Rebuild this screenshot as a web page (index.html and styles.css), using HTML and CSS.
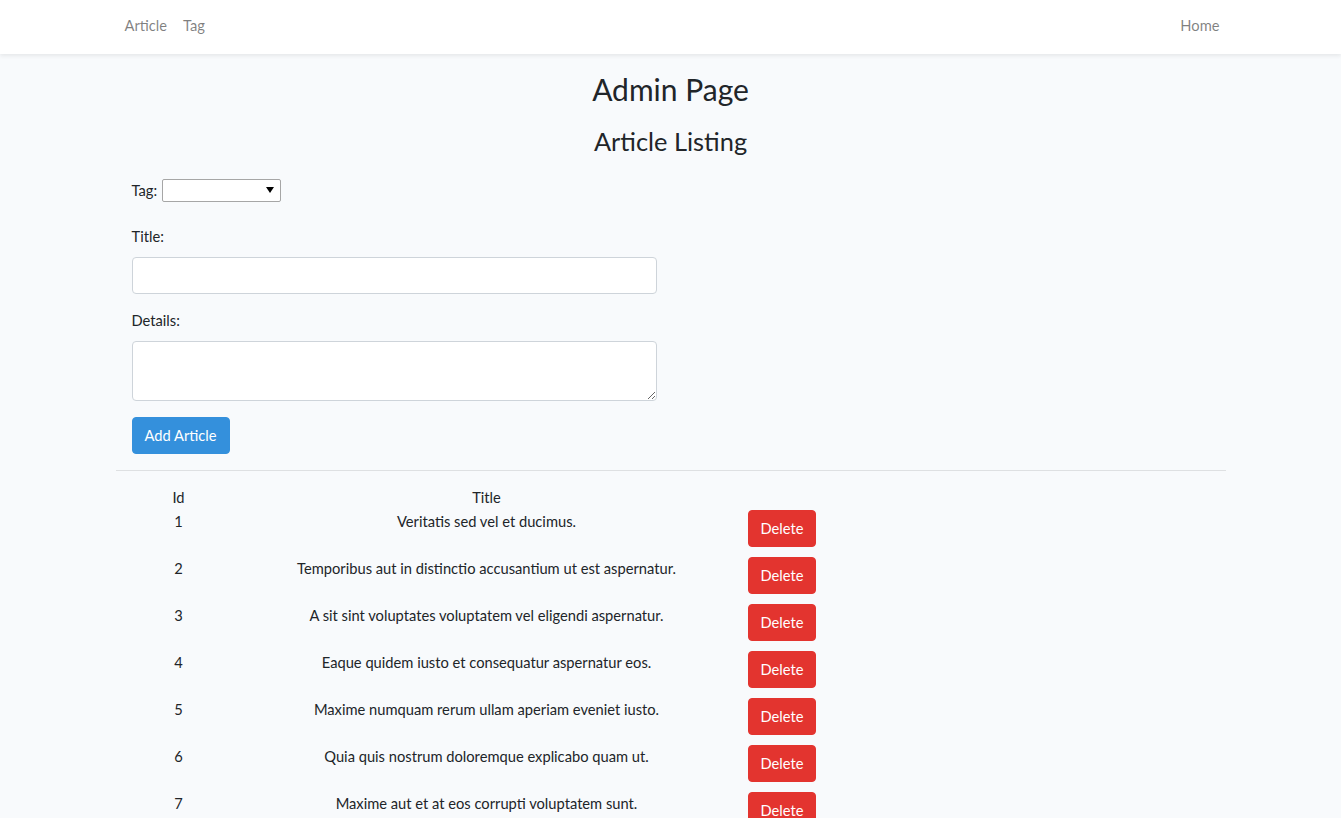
FILE: index.html
```html
<!DOCTYPE html>
<html lang="en">
<head>
<meta charset="utf-8">
<title>Admin Page</title>
<link rel="stylesheet" href="styles.css">
</head>
<body>
<nav class="navbar">
  <div class="container nav-inner">
    <ul class="nav-list">
      <li><a class="nav-link" href="#">Article</a></li>
      <li><a class="nav-link" href="#">Tag</a></li>
    </ul>
    <ul class="nav-list">
      <li><a class="nav-link" href="#">Home</a></li>
    </ul>
  </div>
</nav>
<main class="main">
  <div class="container">
    <h2 class="page-title">Admin Page</h2>
    <h3 class="section-title">Article Listing</h3>
    <form class="article-form">
      <div class="tag-row">
        <label class="label-inline" for="tag">Tag:</label>
        <span class="select-wrap">
          <select id="tag" class="tag-select"><option></option></select>
          <svg class="select-arrow" width="8" height="6" viewBox="0 0 8 6"><path d="M0 0H8L4 6Z" fill="#000"/></svg>
        </span>
      </div>
      <div class="form-group">
        <label class="label-block" for="title">Title:</label>
        <input id="title" class="form-control" type="text">
      </div>
      <div class="form-group form-group-last">
        <label class="label-block" for="details">Details:</label>
        <textarea id="details" class="form-control textarea"></textarea>
      </div>
      <button type="button" class="btn btn-primary">Add Article</button>
    </form>
    <hr class="divider">
    <table class="article-table">
      <thead>
        <tr><th class="col-id">Id</th><th class="col-title">Title</th><th class="col-action"></th></tr>
      </thead>
      <tbody>
        <tr><td>1</td><td>Veritatis sed vel et ducimus.</td><td class="col-action"><button type="button" class="btn btn-danger">Delete</button></td></tr>
        <tr><td>2</td><td>Temporibus aut in distinctio accusantium ut est aspernatur.</td><td class="col-action"><button type="button" class="btn btn-danger">Delete</button></td></tr>
        <tr><td>3</td><td>A sit sint voluptates voluptatem vel eligendi aspernatur.</td><td class="col-action"><button type="button" class="btn btn-danger">Delete</button></td></tr>
        <tr><td>4</td><td>Eaque quidem iusto et consequatur aspernatur eos.</td><td class="col-action"><button type="button" class="btn btn-danger">Delete</button></td></tr>
        <tr><td>5</td><td>Maxime numquam rerum ullam aperiam eveniet iusto.</td><td class="col-action"><button type="button" class="btn btn-danger">Delete</button></td></tr>
        <tr><td>6</td><td>Quia quis nostrum doloremque explicabo quam ut.</td><td class="col-action"><button type="button" class="btn btn-danger">Delete</button></td></tr>
        <tr><td>7</td><td>Maxime aut et at eos corrupti voluptatem sunt.</td><td class="col-action"><button type="button" class="btn btn-danger">Delete</button></td></tr>
      </tbody>
    </table>
  </div>
</main>
</body>
</html>
```

FILE: styles.css
```css
* { box-sizing: border-box; }
html, body { margin: 0; padding: 0; }
body {
  font-family: "Lato", "Noto Sans", sans-serif;
  font-size: 14.7px;
  line-height: 23px;
  color: #212529;
  background: #f8fafc;
}
.container {
  width: 1140px;
  margin: 0 auto;
  padding: 0 15px;
}
.navbar {
  background: #fff;
  box-shadow: 0 2px 4px rgba(0,0,0,0.075);
  padding: 7px 0 8px;
}
.nav-inner {
  display: flex;
  justify-content: space-between;
  align-items: center;
}
.nav-list {
  list-style: none;
  margin: 0;
  padding: 0;
  display: flex;
}
.nav-link {
  display: block;
  padding: 7px 8px 9px;
  color: rgba(0,0,0,0.5);
  text-decoration: none;
  line-height: 23px;
}
.nav-list:first-child li:first-child .nav-link { padding-left: 9px; }
.nav-list:last-child .nav-link { padding-right: 6px; }
.main { padding-top: 17px; }
.page-title {
  margin: 0 0 19px;
  text-align: center;
  font-size: 30px;
  font-weight: 400;
  line-height: 1.2;
}
.section-title {
  margin: 0 0 23px;
  text-align: center;
  font-size: 25.4px;
  font-weight: 400;
  line-height: 1.2;
}
.article-form { padding-left: 16px; }
.tag-row {
  display: flex;
  align-items: center;
  margin-bottom: 23px;
}
.label-inline { margin-right: 5px; }
.select-wrap { position: relative; display: inline-block; }
.tag-select {
  -webkit-appearance: none;
  appearance: none;
  width: 119px;
  height: 23px;
  border: 1px solid #a6a6a6;
  border-radius: 2px;
  background: #fff;
  display: block;
}
.select-arrow {
  position: absolute;
  right: 7px;
  top: 8px;
}
.form-group { margin-bottom: 15px; }
.form-group-last { margin-bottom: 16px; }
.label-block { display: block; margin-bottom: 9px; }
.form-control {
  display: block;
  width: 525px;
  height: 37px;
  padding: 6px 12px;
  font: inherit;
  border: 1px solid #ced4da;
  border-radius: 4px;
  background: #fff;
}
.textarea { height: 60px; resize: vertical; }
.btn {
  display: inline-block;
  font: inherit;
  line-height: 23px;
  padding: 6px 12px;
  border: 1px solid transparent;
  border-radius: 4px;
  color: #fff;
  cursor: pointer;
}
.btn-primary { background: #3490dc; border-color: #3490dc; }
.btn-danger { background: #e3342f; border-color: #e3342f; }
.divider {
  margin: 16px 0 14px;
  border: 0;
  border-top: 1px solid rgba(0,0,0,0.1);
}
.article-table {
  margin-left: 15px;
  border-collapse: separate;
  border-spacing: 2px;
}
.article-table th, .article-table td {
  padding: 1px;
  text-align: center;
  vertical-align: top;
  font-weight: 400;
}
.article-table th { line-height: 18px; }
.col-id { width: 92px; }
.col-title { width: 520px; }
.article-table td.col-action { text-align: left; padding: 1px 1px 7px 0; }
.article-table td.col-action .btn { margin-left: -1px; }
```
